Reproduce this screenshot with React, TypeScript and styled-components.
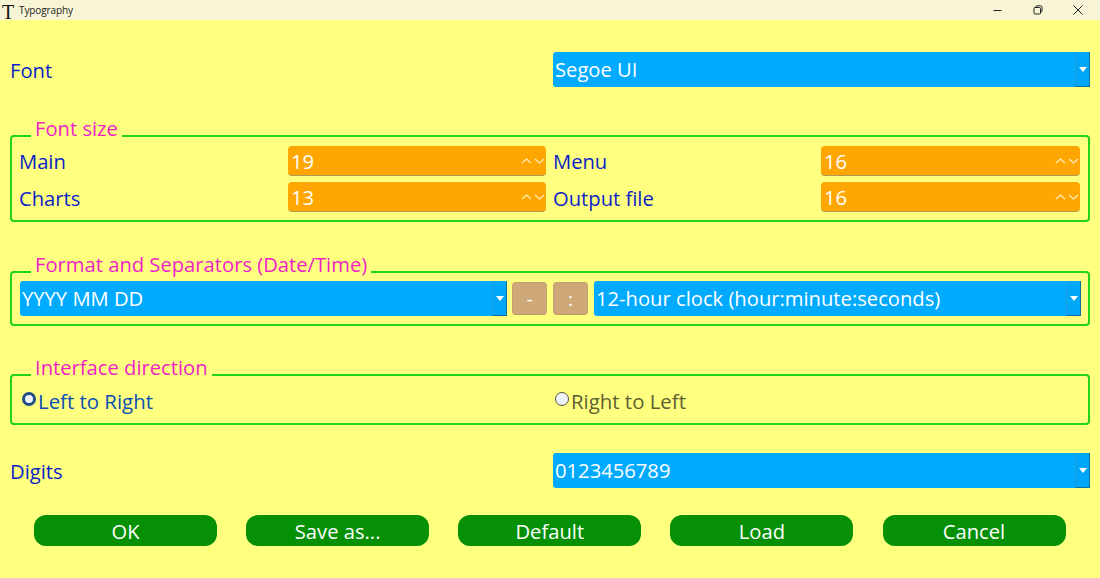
import React from "react";
import styled, { createGlobalStyle } from "styled-components";

const Global = createGlobalStyle`
  html, body { margin: 0; padding: 0; background: #ffff80; }
  body { font-family: "Open Sans", "Noto Sans", "Liberation Sans", sans-serif; }
  * { box-sizing: border-box; }
`;

const Window = styled.div`
  width: 1100px;
  height: 578px;
  background: #ffff80;
  overflow: hidden;
  display: flex;
  flex-direction: column;
`;

const TitleBar = styled.div`
  height: 20px;
  flex: none;
  background: #f8f5d6;
  display: flex;
  align-items: center;
  padding-left: 2px;
`;

const AppGlyph = styled.span`
  font-family: "Liberation Serif", serif;
  font-size: 20px;
  line-height: 20px;
  width: 17px;
  margin-top: 3px;
  color: #111;
`;

const TitleText = styled.span`
  font-size: 10px;
  color: #222;
  letter-spacing: -0.1px;
`;

const WindowButtons = styled.div`
  margin-left: auto;
  display: flex;
  align-items: center;
  padding-right: 16px;
`;

const WindowButton = styled.svg<{ $gap: number }>`
  width: 12px;
  height: 12px;
  margin-left: ${(p) => p.$gap}px;
  fill: none;
  stroke: #222;
  stroke-width: 1;
`;

const Body = styled.div`
  padding: 32px 10px 0;
  display: flex;
  flex-direction: column;
`;

const Row = styled.div<{ $top?: number }>`
  display: grid;
  grid-template-columns: 543px 537px;
  align-items: center;
  height: 35px;
  margin-top: ${(p) => p.$top ?? 0}px;
`;

const Label = styled.span`
  font-size: 20.2px;
  color: #0b1fc9;
  line-height: 30px;
  white-space: nowrap;
`;

const Select = styled.div<{ $width?: number; $left?: number }>`
  height: 35px;
  flex: none;
  width: ${(p) => (p.$width ? `${p.$width}px` : "100%")};
  margin-left: ${(p) => p.$left ?? 0}px;
  background: #00aaff;
  color: #fff;
  font-size: 20.2px;
  line-height: 35px;
  padding-left: 2px;
  border-radius: 3px 0 0 3px;
  display: flex;
  align-items: center;
  justify-content: space-between;
`;

const SelectArrow = styled.span`
  width: 15px;
  align-self: stretch;
  flex: none;
  background: #00a6f8;
  border-right: 1px solid #0a6f9f;
  border-bottom: 1px solid #0a6f9f;
  border-left: 1px solid #1c9fdc;
  display: flex;
  align-items: center;
  justify-content: center;
  &::after {
    content: "";
    border-left: 4.5px solid transparent;
    border-right: 4.5px solid transparent;
    border-top: 5px solid #fff;
  }
`;

const Group = styled.section<{ $top: number; $height: number; $pad: string }>`
  position: relative;
  margin-top: ${(p) => p.$top}px;
  height: ${(p) => p.$height}px;
  border: 2px solid #22d411;
  border-radius: 4px;
  padding: ${(p) => p.$pad};
`;

const Legend = styled.span`
  position: absolute;
  top: -21px;
  left: 19px;
  padding: 0 4px;
  font-size: 20.2px;
  line-height: 24px;
  color: #f01fc8;
  background: #ffff80;
  white-space: nowrap;
`;

const SizeGrid = styled.div`
  display: grid;
  grid-template-columns: 269px 258px 275px 259px;
  grid-auto-rows: 30px;
  row-gap: 6px;
  align-items: center;
`;

const SizeLabel = styled(Label)<{ $pad?: boolean; $low?: boolean }>`
  height: 30px;
  padding-left: ${(p) => (p.$pad ? 7 : 0)}px;
  line-height: ${(p) => (p.$low ? 32 : 30)}px;
`;

const Spinner = styled.div`
  height: 30px;
  background: #ffa600;
  border-radius: 4px;
  border-bottom: 1px solid #b09a50;
  color: #fff;
  font-size: 20.2px;
  line-height: 30px;
  padding: 0 1px 0 3px;
  display: flex;
  align-items: center;
  justify-content: space-between;
`;

const Chevrons = styled.svg`
  width: 24px;
  height: 8px;
  fill: none;
  stroke: #fff0c8;
  stroke-width: 1.1;
`;

const FormatRow = styled.div`
  display: flex;
  align-items: center;
  height: 35px;
`;

const SepButton = styled.div<{ $left: number }>`
  width: 35px;
  height: 33px;
  flex: none;
  margin-left: ${(p) => p.$left}px;
  background: #cfa87a;
  border: 1px solid #c2a070;
  border-bottom-color: #b89a68;
  border-radius: 4px;
  color: #fff;
  font-size: 19px;
  display: flex;
  align-items: center;
  justify-content: center;
`;

const RadioRow = styled.div`
  display: grid;
  grid-template-columns: 533px 1fr;
  align-items: center;
  height: 30px;
`;

const RadioItem = styled.div`
  display: flex;
  align-items: center;
  padding-left: 2px;
`;

const RadioDot = styled.span<{ $on?: boolean }>`
  width: 14px;
  height: 14px;
  border-radius: 50%;
  flex: none;
  margin-top: -4px;
  margin-right: 2px;
  background: ${(p) => (p.$on ? "#f2f6fa" : "#eef1f5")};
  border: ${(p) => (p.$on ? "3.5px solid #1f4f86" : "1.5px solid #55553a")};
`;

const RadioText = styled.span<{ $on?: boolean }>`
  font-size: 20.4px;
  line-height: 30px;
  color: ${(p) => (p.$on ? "#0a4fb5" : "#5e5e33")};
`;

const Footer = styled.div`
  display: flex;
  gap: 29.13px;
  margin-top: 27px;
  padding-left: 24px;
`;

const ActionButton = styled.div`
  width: 183px;
  height: 31px;
  flex: none;
  border-radius: 12px;
  background: #069006;
  color: #fff;
  font-size: 20.2px;
  line-height: 33px;
  text-align: center;
`;

function Spin() {
  return (
    <Chevrons viewBox="0 0 24 8">
      <path d="M1 6l4.5-4 4.5 4M14 2l4.5 4 4.5-4" />
    </Chevrons>
  );
}

export default function App() {
  return (
    <Window>
      <Global />
      <TitleBar>
        <AppGlyph>T</AppGlyph>
        <TitleText>Typography</TitleText>
        <WindowButtons>
          <WindowButton viewBox="0 0 12 12" $gap={0}><path d="M1.5 6.5h8" /></WindowButton>
          <WindowButton viewBox="0 0 12 12" $gap={28}>
            <rect x="2" y="3.5" width="6.5" height="6.5" rx="1" />
            <path d="M4 3.5V2.8a1 1 0 0 1 1-1h3.5a1.5 1.5 0 0 1 1.5 1.5V7a1 1 0 0 1-1 1h-.5" />
          </WindowButton>
          <WindowButton viewBox="0 0 12 12" $gap={28}><path d="M1.5 1.5l9 9M10.5 1.5l-9 9" /></WindowButton>
        </WindowButtons>
      </TitleBar>
      <Body>
        <Row>
          <Label>Font</Label>
          <Select>Segoe UI<SelectArrow /></Select>
        </Row>

        <Group $top={48} $height={87} $pad="9px 0 0 7px">
          <Legend>Font size</Legend>
          <SizeGrid>
            <SizeLabel>Main</SizeLabel>
            <Spinner>19<Spin /></Spinner>
            <SizeLabel $pad>Menu</SizeLabel>
            <Spinner>16<Spin /></Spinner>
            <SizeLabel $low>Charts</SizeLabel>
            <Spinner>13<Spin /></Spinner>
            <SizeLabel $pad $low>Output file</SizeLabel>
            <Spinner>16<Spin /></Spinner>
          </SizeGrid>
        </Group>

        <Group $top={49} $height={55} $pad="8px 0 0 8px">
          <Legend>Format and Separators (Date/Time)</Legend>
          <FormatRow>
            <Select $width={487}>YYYY MM DD<SelectArrow /></Select>
            <SepButton $left={5}>-</SepButton>
            <SepButton $left={6}>:</SepButton>
            <Select $width={487} $left={6}>12-hour clock (hour:minute:seconds)<SelectArrow /></Select>
          </FormatRow>
        </Group>

        <Group $top={48} $height={51} $pad="10px 0 0 8px">
          <Legend>Interface direction</Legend>
          <RadioRow>
            <RadioItem><RadioDot $on /><RadioText $on>Left to Right</RadioText></RadioItem>
            <RadioItem><RadioDot /><RadioText>Right to Left</RadioText></RadioItem>
          </RadioRow>
        </Group>

        <Row $top={28}>
          <Label>Digits</Label>
          <Select>0123456789<SelectArrow /></Select>
        </Row>

        <Footer>
          <ActionButton>OK</ActionButton>
          <ActionButton>Save as...</ActionButton>
          <ActionButton>Default</ActionButton>
          <ActionButton>Load</ActionButton>
          <ActionButton>Cancel</ActionButton>
        </Footer>
      </Body>
    </Window>
  );
}
